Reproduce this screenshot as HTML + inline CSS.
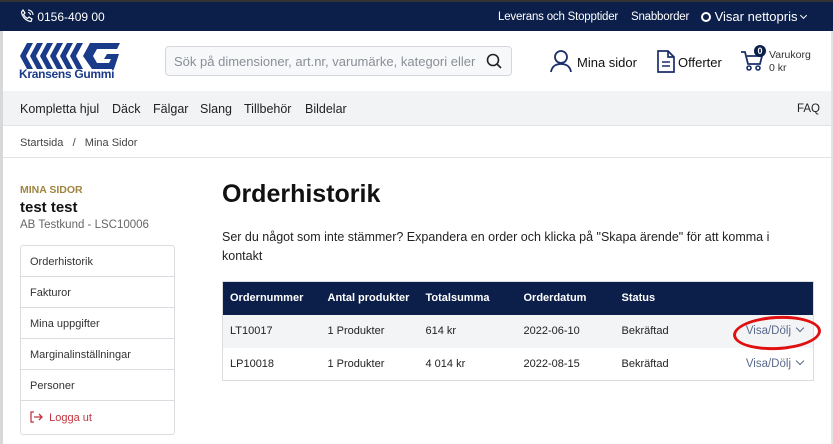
<!DOCTYPE html>
<html><head><meta charset="utf-8"><style>
*{box-sizing:border-box;margin:0;padding:0}
body{width:833px;height:444px;overflow:hidden;font-family:"Liberation Sans",sans-serif;color:#111;background:#fff;position:relative}
.top{position:absolute;left:0;top:0;width:833px;height:31px;background:#0c1f4a;color:#fff;font-size:11.5px;border-top:2px solid #333}
.top span{position:absolute;top:9px;white-space:nowrap}
.lb{position:absolute;left:0;top:31px;width:3px;height:413px;background:#d8d8d8}
.rb{position:absolute;right:0;top:31px;width:2px;height:413px;background:#e4e4e4}
.search{position:absolute;left:165px;top:46px;width:347px;height:30px;border:1px solid #d5d7dc;border-radius:4px;background:#f7f8fa;color:#8a8e96;font-size:13px;padding:7px 8px;white-space:nowrap;overflow:hidden}
.nav{position:absolute;left:3px;top:91px;width:828px;height:35px;background:#f2f3f5;font-size:12.5px;color:#222;border-bottom:1px solid #e2e3e6}
.nav span{position:absolute;top:11px}
.bc{position:absolute;left:20px;top:137px;font-size:11px;color:#444}
.line{position:absolute;left:3px;top:157px;width:828px;height:1px;background:#e2e3e6}
.menu{position:absolute;left:20px;top:245px;width:155px;border:1px solid #dadce0;border-radius:3px}
.menu div{height:31px;border-bottom:1px solid #dadce0;font-size:11px;color:#333;padding:10px 0 0 9px}
.menu div:last-child{border:0;height:33px;color:#c0353f}
table{position:absolute;left:222px;top:281px;width:592px;border-collapse:collapse;font-size:11px;border:1px solid #dadce0}
th{background:#0c1f4a;color:#fff;text-align:left;height:33px;padding-left:7px;font-weight:bold}
td{height:33px;padding-left:7px;color:#222}
tr.g td{background:#f3f4f6}
.vd{color:#5a6a8a;text-align:right;padding-right:8px;font-size:11.5px}
.ch{display:inline-block;width:6px;height:6px;border-right:1.3px solid #5a6a8a;border-bottom:1.3px solid #5a6a8a;transform:rotate(45deg);margin:0 2px 3px 6px}
</style></head><body>
<div class="top">
<span style="left:20px;top:7px;font-size:12px"><svg width="14" height="14" viewBox="0 0 14 14" style="vertical-align:-2px"><path d="M3 1l2 3-1.5 1.5c1 2 2 3 4 4L9 8l3 2-1 2.5C6 12 2 8 1.5 3z" fill="none" stroke="#fff" stroke-width="1.2"/><path d="M8 1a5 5 0 015 5M8 3.5a2.5 2.5 0 012.5 2.5" fill="none" stroke="#fff" stroke-width="1.1"/></svg> 0156-409 00</span>
<span style="left:498px;letter-spacing:-.2px">Leverans och Stopptider</span>
<span style="left:631px;letter-spacing:-.2px">Snabborder</span>
<span style="left:701px;font-size:13px;top:7px"><span style="display:inline-block;width:10px;height:10px;border:2px solid #fff;border-radius:50%;position:static;vertical-align:-1px"></span> Visar nettopris <span style="position:static;display:inline-block;width:5px;height:5px;border-right:1px solid #fff;border-bottom:1px solid #fff;transform:rotate(45deg);margin-bottom:3px"></span></span>
</div>
<div class="lb"></div><div class="rb"></div>
<svg style="position:absolute;left:20px;top:43px" width="100" height="26" viewBox="0 0 100 26"><g fill="#1a3a8a"><path d="M7 0h6L6 13l7 13H7L0 13z"/><path d="M7 0h6L6 13l7 13H7L0 13z" transform="translate(10 0)"/><path d="M7 0h6L6 13l7 13H7L0 13z" transform="translate(20 0)"/><path d="M7 0h6L6 13l7 13H7L0 13z" transform="translate(30 0)"/><path d="M7 0h6L6 13l7 13H7L0 13z" transform="translate(40 0)"/><path d="M7 0h6L6 13l7 13H7L0 13z" transform="translate(50 0)"/><path d="M70 0h30l-3 6H77l-4 7 4 7h12l2-4h-7l3-5h12l-5 15H72L63 13z"/></g></svg>
<div style="position:absolute;left:19px;top:67px;font-size:12px;font-weight:bold;color:#1a3a8a;letter-spacing:-.3px">Kransens Gummi</div>
<div class="search">Sök på dimensioner, art.nr, varumärke, kategori eller</div>
<div style="position:absolute;left:481px;top:47px;width:30px;height:28px;background:#f7f8fa;border-radius:0 4px 4px 0"></div>
<svg style="position:absolute;left:486px;top:53px" width="16" height="16" viewBox="0 0 16 16"><circle cx="7" cy="7" r="5.5" fill="none" stroke="#222" stroke-width="1.6"/><path d="M11 11l4 4" stroke="#222" stroke-width="1.6"/></svg>
<svg style="position:absolute;left:550px;top:49px" width="22" height="24" viewBox="0 0 22 24"><circle cx="11" cy="8" r="6" fill="none" stroke="#1a2f6a" stroke-width="1.8"/><path d="M1 23c1-6 5-8 10-8s9 2 10 8" fill="none" stroke="#1a2f6a" stroke-width="1.8"/></svg>
<div style="position:absolute;left:577px;top:55px;font-size:13px">Mina sidor</div>
<svg style="position:absolute;left:657px;top:50px" width="18" height="23" viewBox="0 0 18 23"><path d="M1 1h10l6 6v15H1z M11 1v6h6" fill="none" stroke="#1a2f6a" stroke-width="1.7"/><path d="M5 12h8M5 16h8" stroke="#1a2f6a" stroke-width="1.6"/></svg>
<div style="position:absolute;left:678px;top:55px;font-size:13px">Offerter</div>
<svg style="position:absolute;left:741px;top:50px" width="24" height="22" viewBox="0 0 24 22"><path d="M0 2h4l3 12h12l2-8H6" fill="none" stroke="#1a2f6a" stroke-width="1.8"/><circle cx="8" cy="18" r="2" fill="none" stroke="#1a2f6a" stroke-width="1.6"/><circle cx="17" cy="18" r="2" fill="none" stroke="#1a2f6a" stroke-width="1.6"/></svg>
<div style="position:absolute;left:754px;top:45px;width:12px;height:12px;border-radius:50%;background:#0c1f4a;color:#fff;font-size:9px;font-weight:bold;text-align:center;line-height:12px">0</div>
<div style="position:absolute;left:769px;top:49px;font-size:10.5px;color:#333;line-height:13px">Varukorg<br>0 kr</div>
<div class="nav"><span style="left:17px">Kompletta hjul</span><span style="left:109px">Däck</span><span style="left:150px">Fälgar</span><span style="left:197px">Slang</span><span style="left:241px">Tillbehör</span><span style="left:302px">Bildelar</span><span style="left:794px;font-size:11.5px;top:12px">FAQ</span></div>
<div class="bc">Startsida &nbsp;&nbsp;/&nbsp;&nbsp; Mina Sidor</div>
<div class="line"></div>
<div style="position:absolute;left:20px;top:184px;font-size:10.5px;font-weight:bold;color:#a08540">MINA SIDOR</div>
<div style="position:absolute;left:20px;top:199px;font-size:15px;font-weight:bold">test test</div>
<div style="position:absolute;left:20px;top:219px;font-size:11.5px;color:#666">AB Testkund - LSC10006</div>
<div class="menu"><div>Orderhistorik</div><div>Fakturor</div><div>Mina uppgifter</div><div>Marginalinställningar</div><div>Personer</div><div><svg width="13" height="12" viewBox="0 0 13 12" style="vertical-align:-2px"><path d="M4 1H1v10h3M4 6h8M9 3l3 3-3 3" fill="none" stroke="#c0353f" stroke-width="1.3"/></svg>&nbsp; Logga ut</div></div>
<div style="position:absolute;left:222px;top:180px;font-size:25px;font-weight:bold">Orderhistorik</div>
<div style="position:absolute;left:222px;top:228px;width:590px;font-size:12.5px;line-height:19px;color:#222">Ser du något som inte stämmer? Expandera en order och klicka på "Skapa ärende" för att komma i kontakt</div>
<table>
<tr><th style="width:98px">Ordernummer</th><th style="width:98px">Antal produkter</th><th style="width:98px">Totalsumma</th><th style="width:98px">Orderdatum</th><th>Status</th><th></th></tr>
<tr class="g"><td>LT10017</td><td>1 Produkter</td><td>614 kr</td><td>2022-06-10</td><td>Bekräftad</td><td class="vd">Visa/Dölj<span class="ch"></span></td></tr>
<tr><td>LP10018</td><td>1 Produkter</td><td>4 014 kr</td><td>2022-08-15</td><td>Bekräftad</td><td class="vd">Visa/Dölj<span class="ch"></span></td></tr>
</table>
<div style="position:absolute;left:733px;top:316px;width:88px;height:34px;border:3px solid #e01010;border-radius:50%;transform:rotate(-3deg)"></div>
</body></html>
